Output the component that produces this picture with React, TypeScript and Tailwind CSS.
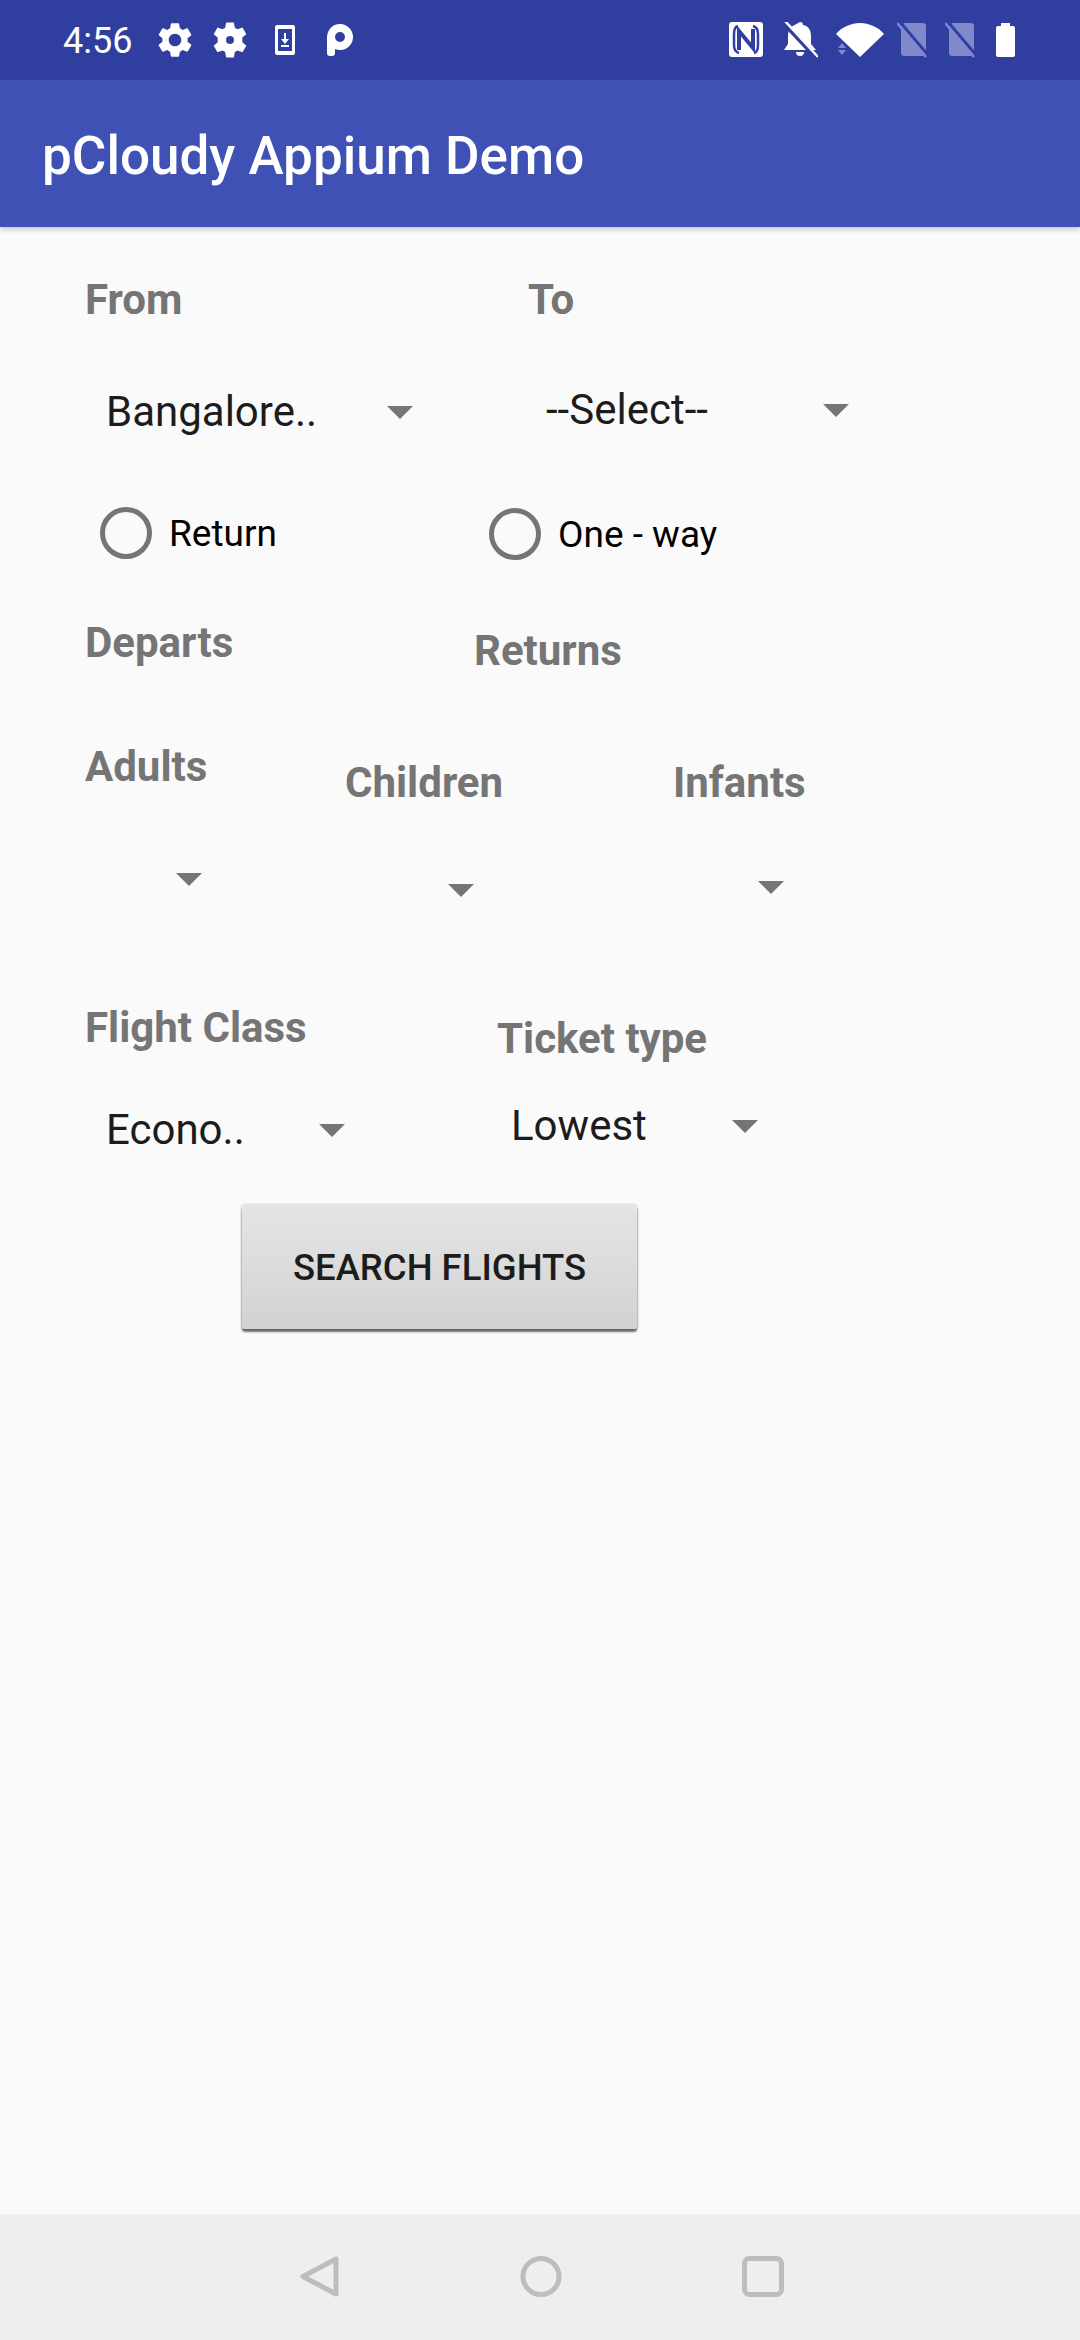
const gear =
  "M19.14 12.94c.04-.3.06-.61.06-.94 0-.32-.02-.64-.07-.94l2.03-1.58c.18-.14.23-.41.12-.61l-1.92-3.32c-.12-.22-.37-.29-.59-.22l-2.39.96c-.5-.38-1.03-.7-1.62-.94l-.36-2.54c-.04-.24-.24-.41-.48-.41h-3.84c-.24 0-.43.17-.47.41l-.36 2.54c-.59.24-1.13.57-1.62.94l-2.39-.96c-.22-.08-.47 0-.59.22L2.74 8.87c-.12.21-.08.47.12.61l2.03 1.58c-.05.3-.09.63-.09.94s.02.64.07.94l-2.03 1.58c-.18.14-.23.41-.12.61l1.92 3.32c.12.22.37.29.59.22l2.39-.96c.5.38 1.03.7 1.62.94l.36 2.54c.05.24.24.41.48.41h3.84c.24 0 .44-.17.47-.41l.36-2.54c.59-.24 1.13-.56 1.62-.94l2.39.96c.22.08.47 0 .59-.22l1.92-3.32c.12-.22.07-.47-.12-.61l-2.01-1.58zM12 15.6c-1.98 0-3.6-1.62-3.6-3.6s1.62-3.6 3.6-3.6 3.6 1.62 3.6 3.6-1.62 3.6-3.6 3.6z"

function Caret() {
  return (
    <svg width="26" height="13" viewBox="0 0 26 13" className="shrink-0">
      <path d="M0 0h26L13 13z" fill="#757575" />
    </svg>
  )
}

function Label({ text, className = "" }: { text: string; className?: string }) {
  return <div className={`text-[42px] leading-[48px] font-bold text-[#757575] ${className}`}>{text}</div>
}

function Dropdown({ text, width, className = "" }: { text: string; width: string; className?: string }) {
  return (
    <div className={`flex items-center ${className}`}>
      <div className={`text-[42px] leading-[56px] text-[#1c1c1c] ${width}`}>{text}</div>
      <Caret />
    </div>
  )
}

function Radio({ text, className = "" }: { text: string; className?: string }) {
  return (
    <div className={`flex items-center ${className}`}>
      <div className="w-[52px] h-[52px] rounded-full border-[5px] border-[#757575]" />
      <div className="ml-[17px] mt-[2px] text-[37px] leading-[52px] text-black">{text}</div>
    </div>
  )
}

function SimOff({ className = "" }: { className?: string }) {
  return (
    <svg width="31" height="36" viewBox="0 0 31 36" className={className}>
      <path d="M7 1h19a3 3 0 0 1 3 3v27a3 3 0 0 1-3 3H7a3 3 0 0 1-3-3V4z" fill="#8189CA" />
      <path d="M3 0l28 33" stroke="#303F9F" strokeWidth="3" />
      <path d="M0 1l29 34" stroke="#8189CA" strokeWidth="2.5" />
    </svg>
  )
}

function StatusBar() {
  return (
    <div className="h-20 bg-[#303F9F] flex items-center shrink-0 pl-[63px] pb-[1px]">
      <span className="text-[36px] leading-none text-white w-[91px] mt-[2px]">4:56</span>
      <svg width="42" height="42" viewBox="0 0 24 24" fill="#fff">
        <path d={gear} />
      </svg>
      <svg width="40" height="40" viewBox="0 0 24 24" fill="#fff" className="ml-[14px]">
        <path fillRule="evenodd" d="M9.7 1.5h4.6l.6 3.2 1.6.9 3-1.1 2.3 4-2.4 2v2.9l2.4 2-2.3 4-3-1.1-1.6.9-.6 3.3H9.7l-.6-3.3-1.6-.9-3 1.1-2.3-4 2.4-2v-2.9l-2.4-2 2.3-4 3 1.1 1.6-.9zM12 9.6a2.4 2.4 0 1 0 0 4.8 2.4 2.4 0 0 0 0-4.8z" />
      </svg>
      <svg width="20" height="30" viewBox="0 0 20 30" className="ml-[25px]">
        <rect x="0" y="0" width="20" height="30" rx="2" fill="#fff" />
        <rect x="3" y="4" width="14" height="22" fill="#303F9F" />
        <path d="M9 8h2v6h3l-4 5-4-5h3z" fill="#fff" />
        <rect x="6" y="20" width="8" height="2" fill="#fff" />
      </svg>
      <svg width="26" height="32" viewBox="0 0 26 32" className="ml-[32px]">
        <path
          fillRule="evenodd"
          d="M0 13a13 13 0 1 1 8 12v4a3 3 0 0 1-3 3H3a3 3 0 0 1-3-3zM13 8a5 5 0 1 0 0 10 5 5 0 0 0 0-10z"
          fill="#fff"
        />
      </svg>
      <div className="flex-1" />
      <svg width="34" height="35" viewBox="0 0 34 35">
        <rect width="34" height="35" rx="3" fill="#fff" />
        <path d="M9 4C5 5 5 9 5 12v11c0 4 1 7 5 8" stroke="#303F9F" strokeWidth="2.5" fill="none" />
        <path d="M25 31c4-1 4-5 4-8V12c0-4-1-7-5-8" stroke="#303F9F" strokeWidth="2.5" fill="none" />
        <path d="M10 28V9l14 17V7" stroke="#303F9F" strokeWidth="4" fill="none" />
      </svg>
      <svg width="36" height="36" viewBox="0 0 36 36" className="ml-[19px]">
        <path d="M18 0c2 0 3 1 3 3 6 1 8 6 8 11v8l5 6H2l4-6V14c0-4 1-7 3-9z" fill="#fff" />
        <path d="M14 30h8a4 4 0 0 1-8 0z" fill="#fff" />
        <path d="M1 0l32 34" stroke="#303F9F" strokeWidth="5" />
        <path d="M3 -1l33 36" stroke="#fff" strokeWidth="2.5" />
      </svg>
      <svg width="48" height="36" viewBox="0 0 48 36" className="ml-[18px]">
        <path d="M0 12C6 5 15 1 24 1s18 4 24 11L24 35z" fill="#fff" />
        <path d="M6 21l-4 5h8zM6 33l-4-5h8z" fill="#8189CA" />
      </svg>
      <SimOff className="ml-[13px]" />
      <SimOff className="ml-[17px]" />
      <svg width="19" height="35" viewBox="0 0 19 35" className="ml-[20px] mr-[65px]">
        <path d="M5 4V1h9v3h3a2 2 0 0 1 2 2v27a2 2 0 0 1-2 2H2a2 2 0 0 1-2-2V6a2 2 0 0 1 2-2z" fill="#fff" />
      </svg>
    </div>
  )
}

function NavBar() {
  return (
    <div className="h-[126px] bg-[#EEEEEE] shrink-0 flex items-start pt-[42px] pl-[300px]">
      <svg width="39" height="41" viewBox="0 0 39 41" fill="none" stroke="#BDBDBD" strokeWidth="5" strokeLinejoin="round">
        <path d="M36 3v35L3 20.5z" />
      </svg>
      <svg width="42" height="41" viewBox="0 0 42 41" fill="none" stroke="#BDBDBD" strokeWidth="5" className="ml-[181px]">
        <circle cx="21" cy="20.5" r="18" />
      </svg>
      <svg width="42" height="41" viewBox="0 0 42 41" fill="none" stroke="#BDBDBD" strokeWidth="5" className="ml-[180px]">
        <rect x="2.5" y="2.5" width="37" height="36" rx="5" />
      </svg>
    </div>
  )
}

export default function App() {
  return (
    <div className="w-[1080px] h-[2340px] flex flex-col bg-[#FAFAFA] font-['Roboto',sans-serif]">
      <StatusBar />
      <header className="h-[147px] bg-[#3F51B5] shrink-0 flex items-center pl-[42px] shadow-[0_3px_5px_rgba(0,0,0,0.18)] z-10">
        <h1 className="text-[53px] font-medium leading-none text-white mt-[5px]">pCloudy Appium Demo</h1>
      </header>
      <main className="flex-1 pt-[49px]">
        <div className="flex pl-[85px] h-[48px]">
          <Label text="From" className="w-[443px]" />
          <Label text="To" />
        </div>
        <div className="flex items-start pl-[106px] mt-[58px] h-[56px]">
          <Dropdown text="Bangalore.." width="w-[281px]" className="mt-[2px]" />
          <Dropdown text="--Select--" width="w-[277px]" className="ml-[133px]" />
        </div>
        <div className="flex items-start pl-[100px] mt-[68px] h-[52px]">
          <Radio text="Return" className="w-[389px]" />
          <Radio text="One - way" className="mt-[1px]" />
        </div>
        <div className="flex items-start pl-[85px] mt-[61px] h-[56px]">
          <Label text="Departs" className="w-[389px]" />
          <Label text="Returns" className="mt-[8px]" />
        </div>
        <div className="flex items-start pl-[85px] mt-[68px] h-[64px]">
          <Label text="Adults" className="w-[260px]" />
          <Label text="Children" className="w-[328px] mt-[16px]" />
          <Label text="Infants" className="mt-[16px]" />
        </div>
        <div className="flex items-start pl-[176px] mt-[66px] h-[24px]">
          <Caret />
          <div className="ml-[246px] mt-[11px]">
            <Caret />
          </div>
          <div className="ml-[284px] mt-[8px]">
            <Caret />
          </div>
        </div>
        <div className="flex items-start pl-[85px] mt-[107px] h-[59px]">
          <Label text="Flight Class" className="w-[412px]" />
          <Label text="Ticket type" className="mt-[11px]" />
        </div>
        <div className="flex items-start pl-[106px] mt-[35px] h-[60px]">
          <Dropdown text="Econo.." width="w-[213px]" className="mt-[4px]" />
          <Dropdown text="Lowest" width="w-[221px]" className="ml-[166px]" />
        </div>
        <button className="block ml-[242px] mt-[47px] w-[395px] h-[124px] pt-[2px] rounded-[3px] bg-gradient-to-b from-[#E5E5E5] to-[#D2D2D2] text-[36.5px] font-medium text-[#1c1c1c] shadow-[0_3px_2px_rgba(0,0,0,0.55),0_0_3px_rgba(0,0,0,0.3)]">
          SEARCH FLIGHTS
        </button>
      </main>
      <NavBar />
    </div>
  )
}
